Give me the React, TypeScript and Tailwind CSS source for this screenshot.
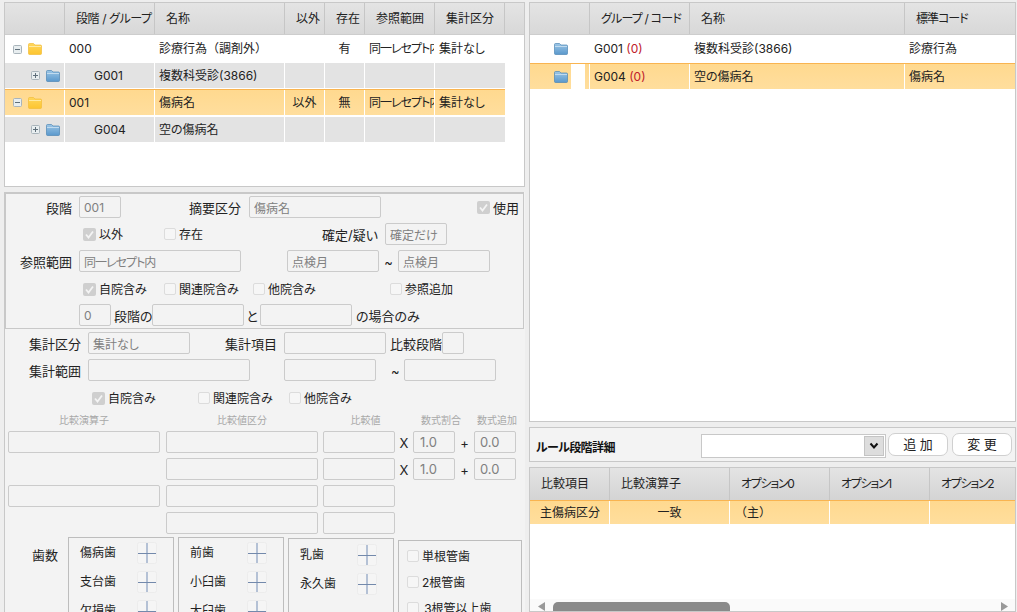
import React from "react";

const font = { fontFamily: '"Inter","Noto Sans CJK JP",sans-serif', fontFeatureSettings: '"palt"' };

function Folder({ color, className = "" }: { color: "y" | "b"; className?: string }) {
  const id = color === "y" ? "fy" : "fb";
  return (
    <svg width="14" height="12" viewBox="0 0 14 12" className={"shrink-0 " + className}>
      <defs>
        <linearGradient id={id} x1="0" y1="0" x2="0" y2="1">
          <stop offset="0" stopColor={color === "y" ? "#ffd65c" : "#9cc6e6"} />
          <stop offset="1" stopColor={color === "y" ? "#fdc530" : "#5a98cc"} />
        </linearGradient>
      </defs>
      <path
        d="M0.5 1.5 Q0.5 0.5 1.5 0.5 H5.5 L7 2 H12.5 Q13.5 2 13.5 3 V10.5 Q13.5 11.5 12.5 11.5 H1.5 Q0.5 11.5 0.5 10.5 Z"
        fill={`url(#${id})`}
        stroke={color === "y" ? "#f2bd3a" : "#4f86b5"}
        strokeWidth="0.7"
      />
      <path d="M1 3.5 H13" stroke={color === "y" ? "#fff0b8" : "#cfe3f3"} strokeWidth="0.8" />
    </svg>
  );
}

function Toggle({ plus, className = "" }: { plus?: boolean; className?: string }) {
  return (
    <svg width="9" height="9" viewBox="0 0 9 9" className={"shrink-0 " + className}>
      <rect x="0.5" y="0.5" width="8" height="8" rx="1" fill="#e8eef0" stroke="#a9b4bb" />
      <path d="M2 4.5 H7" stroke="#5f6f7a" />
      {plus && <path d="M4.5 2 V7" stroke="#5f6f7a" />}
    </svg>
  );
}

function Head({ className, children }: { className: string; children?: React.ReactNode }) {
  return (
    <div className={"h-full shrink-0 border-r border-[#c6c6c6] flex items-center whitespace-nowrap overflow-hidden " + className}>
      {children}
    </div>
  );
}

function Cell({ className, children }: { className: string; children?: React.ReactNode }) {
  return (
    <div className={"h-full shrink-0 border-r border-white flex items-center whitespace-nowrap overflow-hidden " + className}>
      {children}
    </div>
  );
}

const headBar = "h-[32px] flex bg-gradient-to-b from-[#e4e4e4] to-[#d8d8d8] border-b border-[#cdcdcd] text-[12px] text-[#222]";
const orange = "bg-gradient-to-b from-[#ffd98f] to-[#ffde9d] border-t border-[#f9b450]";

function TreeRow({
  cls, first, code, name, a, b, c, d,
}: {
  cls: string; first: React.ReactNode; code: React.ReactNode; name: React.ReactNode; a?: string; b?: string; c?: string; d?: string;
}) {
  return (
    <div className={"flex w-[500px] " + cls}>
      <Cell className="w-[60px]">{first}</Cell>
      <Cell className="w-[90px]">{code}</Cell>
      <Cell className="w-[130px] pl-[4px]">{name}</Cell>
      <Cell className="w-[40px] justify-center">{a}</Cell>
      <Cell className="w-[40px] justify-center">{b}</Cell>
      <Cell className="w-[70px] pl-[4px] tracking-[-1px]">{c}</Cell>
      <Cell className="w-[70px] pl-[4px] border-r-0">{d}</Cell>
    </div>
  );
}

function Field({ className = "", value = "" }: { className?: string; value?: string }) {
  return (
    <input
      disabled
      readOnly
      value={value}
      className={"h-[22px] shrink-0 border border-[#cbcbcb] rounded-[2px] bg-[#f3f3f3] text-[#808080] text-[12px] px-[4px] outline-none " + className}
    />
  );
}

function Check({ checked, label, className = "" }: { checked?: boolean; label: string; className?: string }) {
  return (
    <div className={"flex items-center gap-[3px] shrink-0 whitespace-nowrap text-[12px] leading-[18px] text-[#222] " + className}>
      {checked ? (
        <svg width="13" height="13" viewBox="0 0 13 13" className="shrink-0">
          <rect width="13" height="13" rx="2" fill="#cfcfcf" />
          <path d="M3 6.5 L5.5 9.5 L10 3.5" fill="none" stroke="#f4f4f4" strokeWidth="1.8" />
        </svg>
      ) : (
        <span className="w-[12px] h-[12px] shrink-0 rounded-[2px] border border-[#dcdcdc] bg-[#f6f6f6]" />
      )}
      <span className="pt-[2px]">{label}</span>
    </div>
  );
}

function Label({ className, children }: { className: string; children: React.ReactNode }) {
  return <div className={"shrink-0 text-[13px] leading-[18px] pt-[2px] text-[#222] whitespace-nowrap " + className}>{children}</div>;
}

function Spin() {
  return (
    <svg width="20" height="22" viewBox="0 0 20 22" className="shrink-0">
      <rect x="0.5" y="0.5" width="19" height="21" rx="2" fill="#f5f5f5" stroke="#ececec" />
      <path d="M10 1 V21" stroke="#b4c1d5" strokeWidth="2" />
      <path d="M1 11.5 H19" stroke="#7389ab" />
    </svg>
  );
}

function ToothBox({ items, className = "" }: { items: string[]; className?: string }) {
  return (
    <div className={"w-[106px] h-[100px] shrink-0 border border-[#bdbdbd] pl-[11px] " + className}>
      {items.map((t) => (
        <div key={t} className="h-[29px] flex items-center text-[12px] text-[#222]">
          <span className="w-[57px] shrink-0 pt-[1px]">{t}</span>
          <Spin />
        </div>
      ))}
    </div>
  );
}

function CmpRow({ first, last }: { first?: boolean; last?: boolean }) {
  return (
    <div className="flex items-center h-[22px] mt-[5px] ml-[3px]">
      {first ? <Field className="w-[152px]" /> : <div className="w-[152px] h-[22px] shrink-0" />}
      <Field className="w-[152px] ml-[6px]" />
      <Field className="w-[72px] ml-[5px]" />
      {last && (
        <>
          <Label className="w-[18px] text-center">X</Label>
          <Field className="w-[42px] text-[13px] px-[6px]" value="1.0" />
          <Label className="w-[19px] text-center">+</Label>
          <Field className="w-[42px] text-[13px] px-[5px]" value="0.0" />
        </>
      )}
    </div>
  );
}

export default function App() {
  return (
    <div style={font} className="w-[1017px] h-[612px] overflow-hidden flex bg-[#eeeeee] text-[12px] text-[#222]">
      {/* left column */}
      <div className="w-[521px] ml-[4px] pt-[2px] shrink-0 flex flex-col">
        <div className="h-[185px] shrink-0 border border-[#c8c8c8] bg-white overflow-hidden">
          <div className={headBar}>
            <Head className="w-[60px]" />
            <Head className="w-[90px] pl-[11px] tracking-[-0.4px]">段階 / グループ</Head>
            <Head className="w-[130px] pl-[11px]">名称</Head>
            <Head className="w-[40px] pl-[11px]">以外</Head>
            <Head className="w-[40px] pl-[11px]">存在</Head>
            <Head className="w-[70px] pl-[11px]">参照範囲</Head>
            <Head className="w-[70px] pl-[11px]">集計区分</Head>
            <div className="flex-1" />
          </div>
          <TreeRow
            cls="h-[28px]"
            first={<><Toggle className="ml-[8px]" /><Folder color="y" className="ml-[6px]" /></>}
            code={<span className="pl-[4px]">000</span>}
            name={<span className="[font-feature-settings:normal]">診療行為（調剤外）</span>}
            b="有"
            c="同一レセプト内"
            d="集計なし"
          />
          <TreeRow
            cls="h-[25px] bg-[#e3e3e3]"
            first={<><Toggle plus className="ml-[26px]" /><Folder color="b" className="ml-[6px]" /></>}
            code={<span className="pl-[29px]">G001</span>}
            name="複数科受診(3866)"
          />
          <TreeRow
            cls={"h-[26px] mt-[1px] " + orange}
            first={<><Toggle className="ml-[8px]" /><Folder color="y" className="ml-[6px]" /></>}
            code={<span className="pl-[4px]">001</span>}
            name="傷病名"
            a="以外"
            b="無"
            c="同一レセプト内"
            d="集計なし"
          />
          <TreeRow
            cls="h-[25px] mt-[2px] bg-[#e3e3e3]"
            first={<><Toggle plus className="ml-[26px]" /><Folder color="b" className="ml-[6px]" /></>}
            code={<span className="pl-[29px]">G004</span>}
            name="空の傷病名"
          />
        </div>

        <div className="mt-[5px] flex-1 border-l border-[#c8c8c8] bg-[#f3f3f3] overflow-hidden">
          <div className="h-[137px] border-t-2 border-b border-r border-[#c8c8c8] shadow-[inset_1px_0_0_#c8c8c8] w-[519px] pt-[2px]">
            <div className="flex items-center h-[22px]">
              <Label className="w-[67px] text-right">段階</Label>
              <Field className="w-[42px] ml-[7px]" value="001" />
              <Label className="w-[120px] text-right">摘要区分</Label>
              <Field className="w-[132px] ml-[8px]" value="傷病名" />
              <Check checked label="使用" className="ml-[96px] gap-[2px] text-[13px]" />
            </div>
            <div className="flex items-center h-[22px] mt-[5px]">
              <Check checked label="以外" className="w-[81px] ml-[78px]" />
              <Check label="存在" className="w-[100px]" />
              <Label className="w-[114px] text-right">確定/疑い</Label>
              <Field className="w-[62px] ml-[7px]" value="確定だけ" />
            </div>
            <div className="flex items-center h-[22px] mt-[5px]">
              <Label className="w-[67px] text-right">参照範囲</Label>
              <Field className="w-[162px] ml-[7px] tracking-[-1px]" value="同一レセプト内" />
              <Field className="w-[92px] ml-[46px]" value="点検月" />
              <Label className="w-[19px] text-center">~</Label>
              <Field className="w-[92px]" value="点検月" />
            </div>
            <div className="flex items-center h-[22px] mt-[6px]">
              <Check checked label="自院含み" className="w-[81px] ml-[78px]" />
              <Check label="関連院含み" className="w-[89px]" />
              <Check label="他院含み" className="w-[137px]" />
              <Check label="参照追加" />
            </div>
            <div className="flex items-center h-[22px] mt-[4px]">
              <Field className="w-[32px] ml-[74px]" value="0" />
              <Label className="w-[41px] pl-[3px] text-[12px]">段階の</Label>
              <Field className="w-[92px]" />
              <Label className="w-[16px] text-center text-[12px]">と</Label>
              <Field className="w-[92px]" />
              <Label className="ml-[4px] text-[12px]">の場合のみ</Label>
            </div>
          </div>

          <div className="flex items-center h-[22px] mt-[3px]">
            <Label className="w-[76px] text-right">集計区分</Label>
            <Field className="w-[102px] ml-[7px]" value="集計なし" />
            <Label className="w-[87px] text-right">集計項目</Label>
            <Field className="w-[102px] ml-[7px]" />
            <Label className="w-[52px] ml-[4px]">比較段階</Label>
            <Field className="w-[22px]" />
          </div>
          <div className="flex items-center h-[22px] mt-[5px]">
            <Label className="w-[76px] text-right">集計範囲</Label>
            <Field className="w-[162px] ml-[7px]" />
            <Field className="w-[92px] ml-[34px]" />
            <Label className="w-[28px] pl-[15px]">~</Label>
            <Field className="w-[92px]" />
          </div>
          <div className="flex items-center h-[22px] mt-[6px]">
            <Check checked label="自院含み" className="w-[106px] ml-[87px]" />
            <Check label="関連院含み" className="w-[91px]" />
            <Check label="他院含み" />
          </div>
          <div className="flex items-center h-[12px] mt-[5px] text-[10px] text-[#a8a8a8] leading-[12px]">
            <div className="w-[152px] ml-[3px] text-center shrink-0">比較演算子</div>
            <div className="w-[152px] ml-[6px] text-center shrink-0">比較値区分</div>
            <div className="w-[71px] ml-[12px] text-center shrink-0">比較値</div>
            <div className="w-[44px] ml-[18px] text-center shrink-0">数式割合</div>
            <div className="w-[44px] ml-[12px] text-center shrink-0">数式追加</div>
          </div>
          <CmpRow first last />
          <CmpRow last />
          <CmpRow first />
          <CmpRow />

          <div className="flex items-start mt-[3px]">
            <Label className="w-[53px] text-right mt-[7px]">歯数</Label>
            <ToothBox className="ml-[10px]" items={["傷病歯", "支台歯", "欠損歯"]} />
            <ToothBox className="ml-[4px]" items={["前歯", "小臼歯", "大臼歯"]} />
            <ToothBox className="ml-[4px] mt-[1px] pt-[1px]" items={["乳歯", "永久歯"]} />
            <div className="ml-[4px] mt-[3px] w-[124px] h-[100px] shrink-0 border border-[#bdbdbd] pl-[8px] pt-[2px]">
              <Check label="単根管歯" className="h-[26px]" />
              <Check label="2根管歯" className="h-[26px]" />
              <Check label={"\u20093根管以上歯"} className="h-[26px]" />
            </div>
          </div>
        </div>
      </div>

      {/* right column */}
      <div className="w-[487px] ml-[4px] pt-[2px] shrink-0 flex flex-col">
        <div className="h-[420px] shrink-0 border border-[#c8c8c8] bg-white">
          <div className={headBar}>
            <Head className="w-[60px]" />
            <Head className="w-[100px] pl-[11px] tracking-[-0.8px]">グループ / コード</Head>
            <Head className="w-[215px] pl-[11px]">名称</Head>
            <Head className="w-[110px] pl-[11px] border-r-0 tracking-[-1px]">標準コード</Head>
            <div className="flex-1" />
          </div>
          <div className="flex h-[28px] w-[485px]">
            <Cell className="w-[60px]"><Folder color="b" className="ml-[24px]" /></Cell>
            <Cell className="w-[100px] pl-[4px]"><span>G001 <span className="text-[#c0202a]">(0)</span></span></Cell>
            <Cell className="w-[215px] pl-[4px]">複数科受診(3866)</Cell>
            <Cell className="w-[110px] pl-[4px] border-r-0">診療行為</Cell>
          </div>
          <div className={"flex h-[26px] w-[485px] " + orange}>
            <Cell className="w-[60px]">
              <Folder color="b" className="ml-[24px]" />
              <div className="w-[14px] h-full ml-[3px] bg-white" />
            </Cell>
            <Cell className="w-[100px] pl-[4px]"><span>G004 <span className="text-[#c0202a]">(0)</span></span></Cell>
            <Cell className="w-[215px] pl-[4px]">空の傷病名</Cell>
            <Cell className="w-[110px] pl-[4px] border-r-0">傷病名</Cell>
          </div>
        </div>

        <div className="h-[35px] mt-[5px] shrink-0 border border-[#c8c8c8] bg-[#f3f3f3] flex items-center">
          <div className="ml-[6px] w-[165px] mt-[6px] shrink-0 font-bold text-[12px] text-[#111] tracking-[-0.6px]">ルール段階詳細</div>
          <div className="w-[185px] h-[24px] shrink-0 border border-[#c8c8c8] bg-white flex items-center justify-end pr-[1px] mt-[2px]">
            <div className="w-[20px] h-[20px] bg-[#dddddd] border border-[#c4c4c4] flex items-center justify-center">
              <svg width="10" height="8" viewBox="0 0 10 8">
                <path d="M1.5 1.5 L5 5.5 L8.5 1.5" fill="none" stroke="#111" strokeWidth="2" />
              </svg>
            </div>
          </div>
          <button className="w-[60px] h-[23px] ml-[2px] shrink-0 rounded-[7px] border border-[#d0d0d0] bg-white text-[13px] text-[#222]">追 加</button>
          <button className="w-[60px] h-[23px] ml-[4px] shrink-0 rounded-[7px] border border-[#d0d0d0] bg-white text-[13px] text-[#222]">変 更</button>
        </div>

        <div className="mt-[5px] flex-1 border border-[#c8c8c8] bg-white flex flex-col overflow-hidden">
          <div className="h-[32px] shrink-0 flex bg-gradient-to-b from-[#e4e4e4] to-[#d4d4d4] text-[12px]">
            <Head className="w-[80px] pl-[11px]">比較項目</Head>
            <Head className="w-[120px] pl-[11px]">比較演算子</Head>
            <Head className="w-[100px] pl-[11px] tracking-[-1.3px]">オプション0</Head>
            <Head className="w-[100px] pl-[11px] tracking-[-1.3px]">オプション1</Head>
            <Head className="w-[86px] pl-[11px] border-r-0 tracking-[-1.3px]">オプション2</Head>
          </div>
          <div className={"flex h-[24px] shrink-0 " + orange}>
            <Cell className="w-[80px] pl-[10px]">主傷病区分</Cell>
            <Cell className="w-[120px] justify-center">一致</Cell>
            <Cell className="w-[100px] pl-[5px] [font-feature-settings:normal]">（主）</Cell>
            <Cell className="w-[100px]" />
            <Cell className="w-[86px] border-r-0" />
          </div>
          <div className="flex-1" />
          <div className="h-[12px] shrink-0 bg-[#fafafa] flex items-end relative">
            <svg width="8" height="9" viewBox="0 0 8 9" className="ml-[8px] shrink-0">
              <path d="M7 0 V9 H7 L0 4.5 Z" fill="#999" />
            </svg>
            <div className="w-[177px] h-[9px] ml-[7px] shrink-0 rounded-t-[5px] bg-[#8a8a8a]" />
            <svg width="8" height="9" viewBox="0 0 8 9" className="ml-auto mr-[7px] shrink-0">
              <path d="M1 0 V9 L8 4.5 Z" fill="#999" />
            </svg>
          </div>
        </div>
      </div>
    </div>
  );
}
